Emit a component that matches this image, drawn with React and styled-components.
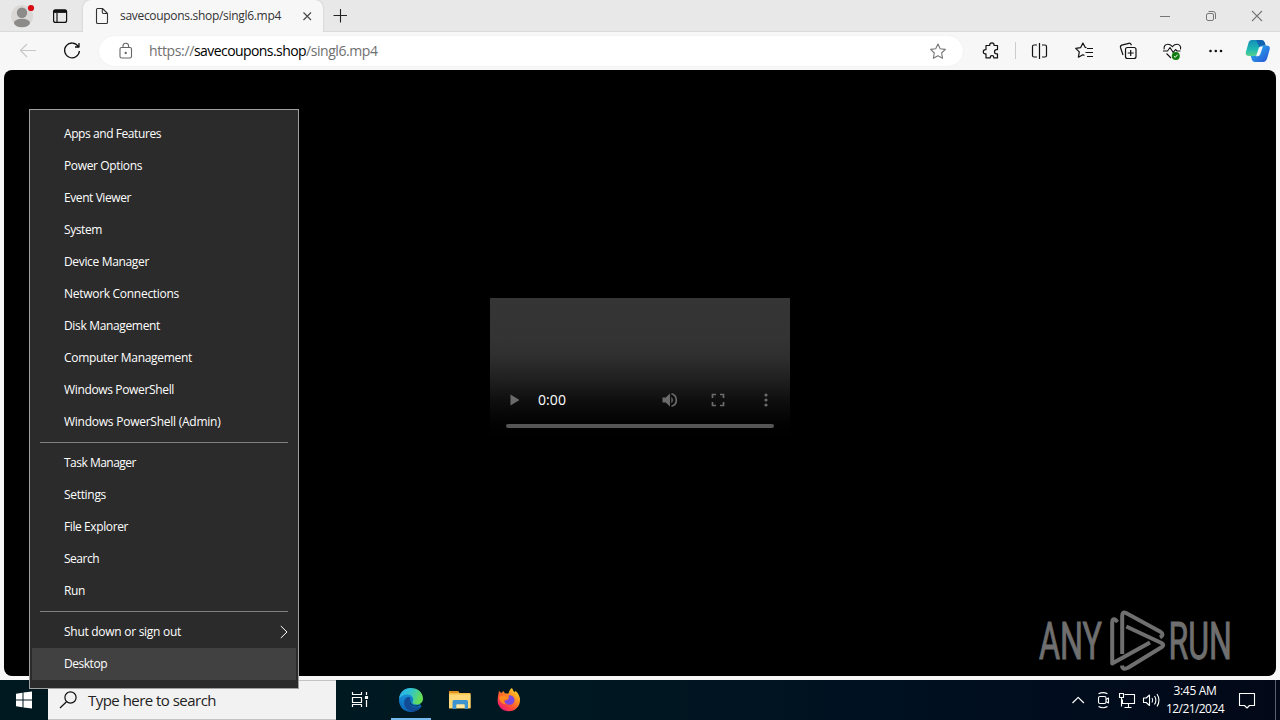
import React from 'react'
import styled, { createGlobalStyle } from 'styled-components'

const menuGroups = [
  [
    { label: 'Apps and Features', width: 97 },
    { label: 'Power Options', width: 78 },
    { label: 'Event Viewer', width: 67 },
    { label: 'System', width: 38 },
    { label: 'Device Manager', width: 85 },
    { label: 'Network Connections', width: 115 },
    { label: 'Disk Management', width: 96 },
    { label: 'Computer Management', width: 128 },
    { label: 'Windows PowerShell', width: 110 },
    { label: 'Windows PowerShell (Admin)', width: 156.5 },
  ],
  [
    { label: 'Task Manager', width: 72 },
    { label: 'Settings', width: 42 },
    { label: 'File Explorer', width: 64 },
    { label: 'Search', width: 35 },
    { label: 'Run', width: 21 },
  ],
  [
    { label: 'Shut down or sign out', width: 117, more: true },
    { label: 'Desktop', width: 43, active: true },
  ],
]

// keeps a label at a fixed width by adjusting the space between its letters
function Label({ width, children }) {
  const ref = React.useRef(null)
  const [spacing, setSpacing] = React.useState(0)
  React.useLayoutEffect(() => {
    const natural = ref.current.getBoundingClientRect().width
    setSpacing((width - natural) / ref.current.textContent.length)
  }, [width])
  return <LabelText ref={ref} style={{ letterSpacing: spacing + 'px' }}>{children}</LabelText>
}

function TitleBar() {
  return (
    <TitleRow>
      <Picture width="44" height="32">
        <circle cx="22" cy="16" r="11" fill="#dad8d7" />
        <circle cx="22" cy="12.7" r="5.2" fill="#8d8b89" />
        <ellipse cx="22" cy="23" rx="8" ry="4.2" fill="#8d8b89" />
        <circle cx="31" cy="8" r="3.1" fill="#d90b16" />
      </Picture>
      <LineIcon width="39" height="32" $color="#111" $weight={1.2}>
        <rect x="9.6" y="9.8" width="13" height="12.6" rx="2" />
        <path d="M9.6 11.4h13" strokeWidth="3" />
        <path d="M13 13v9" />
      </LineIcon>
      <Tab>
        <LineIcon width="37" height="32" $color="#333" $weight={1.1}>
          <path d="M14.5 8.5h5l5 5v8.7q0 1.3-1.3 1.3h-8.4q-1.3 0-1.3-1.3V9.8q0-1.3 1-1.3zM19.3 8.7v3.6q0 1.2 1.2 1.2h4" />
        </LineIcon>
        <TabTitle><Label width={161}>savecoupons.shop/singl6.mp4</Label></TabTitle>
        <LineIcon width="32" height="32" $color="#444" $weight={1.1}>
          <path d="M12.5 12.5l7.5 7.5M20 12.5l-7.5 7.5" />
        </LineIcon>
      </Tab>
      <LineIcon width="34" height="32" $color="#222" $weight={1.1}>
        <path d="M10.5 15.5H24M17.5 9v13.5" />
      </LineIcon>
      <Spacer />
      <LineIcon width="46" height="32" $color="#777" $weight={1}><path d="M18 16.5h10" /></LineIcon>
      <LineIcon width="46" height="32" $color="#777" $weight={1}>
        <rect x="18.5" y="13.5" width="7" height="7" rx="1.5" />
        <path d="M20.5 11.5H25q2.5 0 2.5 2.5v5" />
      </LineIcon>
      <LineIcon width="46" height="32" $color="#777" $weight={1.1}><path d="M18 11l10 10M28 11L18 21" /></LineIcon>
    </TitleRow>
  )
}

function Toolbar() {
  return (
    <ToolRow>
      <LineIcon width="50" height="38" $color="#c7c7c7" $weight={1.1}>
        <path d="M36 18.5H20.5M27 12l-6.5 6.5L27 25" />
      </LineIcon>
      <LineIcon width="49" height="38" $color="#111" $weight={1.3}>
        <path d="M28.3 14.5A7.4 7.4 0 1 0 29.4 19M29 11v4h-4" />
      </LineIcon>
      <AddressBar>
        <LineIcon width="50" height="30" $color="#666" $weight={1.1}>
          <rect x="21" y="11.5" width="11.5" height="10.5" rx="1.6" />
          <path d="M24 11.5V10a2.8 2.8 0 0 1 5.6 0v1.5" />
          <circle cx="26.7" cy="17" r=".6" fill="#666" />
        </LineIcon>
        <Url>
          <Label width={45}>https://</Label>
          <Host><Label width={112}>savecoupons.shop</Label></Host>
          <Label width={71.5}>/singl6.mp4</Label>
        </Url>
        <Spacer />
        <LineIcon width="51" height="30" $color="#777" $weight={1.1}>
          <path d="M26 8l2.2 4.7 5.2.7-3.8 3.6.9 5.2-4.5-2.5-4.6 2.5.9-5.2-3.7-3.6 5.1-.7z" />
        </LineIcon>
      </AddressBar>
      <LineIcon width="52" height="38" $color="#111" $weight={1.2}>
        <path d="M23 13.500h3.700v-.4a2.200 2.200 0 0 1 4.400 0v.4h3.400v4.100h-.9a2.100 2.100 0 0 0 0 4.200h.9v4.100h-3.700v-.4a1.800 1.800 0 0 0-3.600 0v.4H23v-4.100h-.6a2.100 2.100 0 0 1 0-4.200h.6z" />
      </LineIcon>
      <Divider />
      <LineIcon width="46" height="38" $color="#111" $weight={1.2}>
        <path d="M21 13h-3q-1.500 0-1.500 1.500v9q0 1.500 1.500 1.500h3M26 13h3q1.500 0 1.500 1.500v9q0 1.500-1.500 1.500h-3M23.500 11v16" />
      </LineIcon>
      <LineIcon width="44" height="38" $color="#111" $weight={1.2}>
        <path d="M24.5 15.7l-1.2-.2-2.4-4.4-2.2 4.5-5 .8 3.6 3.5-.9 5.3 4.5-2.5 1.5.8M25 16.5h6M23.5 20.5H31M25 24.5h6" />
      </LineIcon>
      <LineIcon width="44" height="38" $color="#111" $weight={1.2}>
        <rect x="19.5" y="15.5" width="10.5" height="11" rx="2" />
        <path d="M24.7 18v6M21.7 21h6M17 23l-2.5-7.500q-.5-1.800 1.300-2.400l7-1.800q1.700-.4 2.300 1.200l.3.8" />
      </LineIcon>
      <LineIcon width="44" height="38" $color="#111" $weight={1.1}>
        <path d="M14.200 17.300c-.7-3 1.200-5 3.500-5 2 0 3.400.9 4.700 2.300 1.300-1.400 2.700-2.300 4.700-2.300 2.500 0 4.100 2.200 3.400 5M13 19h4.500l2.500-3.500 3.200 5 2.300-3 1.500 1.500h3.500M16.500 21.500l4.500 4.500" />
        <circle cx="25.8" cy="24" r="4" fill="#107c10" stroke="none" />
        <path d="M24 24.300l1.300 1 2.300-2.600" stroke="#fff" strokeWidth="1" />
      </LineIcon>
      <Picture width="44" height="38">
        <g fill="#111"><circle cx="16.5" cy="19" r="1.3" /><circle cx="21.8" cy="19" r="1.3" /><circle cx="27" cy="19" r="1.3" /></g>
      </Picture>
      <Picture width="42" height="38">
        <defs>
          <linearGradient id="copA" x1="0" y1="0" x2="0" y2="1"><stop offset="0" stopColor="#168cb9" /><stop offset=".6" stopColor="#20bbb2" /><stop offset="1" stopColor="#58cf8b" /></linearGradient>
          <linearGradient id="copB" x1="0" y1="0" x2="1" y2="1"><stop offset="0" stopColor="#24b9f2" /><stop offset="1" stopColor="#2c51d5" /></linearGradient>
        </defs>
        <g transform="translate(-2 0) scale(1.06 1)">
          <path d="M14 8h10q2.400 0 3.100 2.500l.8 3h-3.100q-2 0-2.700 2l-1.800 6q-.8 2.500-3.200 2.500h-4.300q-4.600 0-3.400-4.200l2.300-8.500Q12.400 8 15 8z" fill="url(#copA)" />
          <path d="M24 13.500h4.300q4.600 0 3.400 4.200l-2.300 8.600q-1 3.700-3.900 3.700H18q-2.400 0-3.100-2.500l-1-3.500h3.200q2.300 0 3-2l1.500-5.500q.8-3 2.400-3z" fill="url(#copB)" />
          <path d="M19 8h5q2.400 0 3.100 2.500l.8 3h-3.100q-2.200 0-2.600 1.800z" fill="#1264b1" />
          <path d="M21.500 16q.6-1.600 1.900-1.600h2l-2.600 8q-.6 1.800-2.400 1.800h-1.500z" fill="#f7f7f7" />
        </g>
      </Picture>
    </ToolRow>
  )
}

function Player() {
  return (
    <Video>
      <Controls>
        <Glyph width="48" height="48"><path d="M20.5 18.500v11l9-5.500z" /></Glyph>
        <Time><Label width={28}>0:00</Label></Time>
        <Spacer />
        <Glyph width="48" height="48">
          <path d="M16.500 21.500v5h3.200l4.300 4V17.500l-4.300 4z" />
          <path d="M25.300 20.700q3.400 3.300 0 6.600z" />
          <path d="M25.500 17.800a6.400 6.400 0 0 1 0 12.400" fill="none" stroke="#6b6b6b" strokeWidth="1.7" />
        </Glyph>
        <Glyph width="48" height="48">
          <path d="M18.500 22v-3.500h3.500M26 18.500h3.500v3.500M29.500 26v3.500h-3.500M22 29.500h-3.500v-3.500" fill="none" stroke="#6b6b6b" strokeWidth="1.7" />
        </Glyph>
        <Glyph width="48" height="48">
          <circle cx="24" cy="19" r="1.6" /><circle cx="24" cy="24" r="1.6" /><circle cx="24" cy="29" r="1.6" />
        </Glyph>
      </Controls>
      <Track />
    </Video>
  )
}

function Watermark() {
  return (
    <Mark width="204" height="66" viewBox="0 0 204 66">
      <g fontFamily="Roboto, sans-serif" fontSize="51" fill="#6f6f6f" stroke="#6f6f6f" strokeWidth="1">
        <text x="1" y="52" textLength="63" lengthAdjust="spacingAndGlyphs">ANY</text>
        <text x="130.5" y="52" textLength="63.5" lengthAdjust="spacingAndGlyphs">RUN</text>
      </g>
      <g fill="none" stroke="#6f6f6f" strokeWidth="4" strokeLinejoin="round">
        <path d="M79.500 15L77.500 12.800Q74.200 11 74.200 15.500V56.500L112 35.500" />
        <path d="M84.200 47V9Q84.200 4 88 6L122 24.500Q127 27.500 122 30.500" />
        <path d="M88.300 19.500L123.500 36Q127 38 123.500 40.300L90 60.800Q84.500 63.500 84 58.500" />
      </g>
    </Mark>
  )
}

function StartMenu() {
  return (
    <Menu>
      {menuGroups.map((group, i) => (
        <MenuGroup key={i}>
          {group.map((item) => (
            <MenuItem key={item.label} $active={item.active}>
              <Label width={item.width}>{item.label}</Label>
              {item.more && (
                <LineIcon width="8" height="14" $color="#fff" $weight={1}><path d="M.8 1L7 7 .8 13" /></LineIcon>
              )}
            </MenuItem>
          ))}
        </MenuGroup>
      ))}
    </Menu>
  )
}

function Taskbar() {
  return (
    <Bar>
      <Picture width="48" height="40">
        <path d="M16 13.700l6.500-1v6.800H16zM23.500 12.500l8.500-1v8h-8.500zM16 20.500h6.500v6.800l-6.500-1zM23.500 20.500H32v8l-8.500-1z" fill="#fff" />
      </Picture>
      <SearchBox>
        <LineIcon width="40" height="38" $color="#111" $weight={1.2}>
          <circle cx="22.5" cy="16.5" r="5.6" /><path d="M18.500 20.700L12 27" />
        </LineIcon>
        <Label width={128}>Type here to search</Label>
      </SearchBox>
      <TaskButton>
        <LineIcon width="48" height="40" $color="#fff" $weight={1.2}>
          <path d="M16.500 12v2.500h9V12M16.500 27v-2.500h9V27M16.500 17.500h9v5h-9zM30.500 12v3M30.500 20v7" />
          <rect x="29.5" y="16.5" width="2" height="2" fill="#fff" />
        </LineIcon>
      </TaskButton>
      <TaskButton $open>
        <Picture width="48" height="40">
          <defs>
            <linearGradient id="edgeA" x1="0" y1="0" x2="1" y2=".3"><stop offset="0" stopColor="#2aaef0" /><stop offset=".5" stopColor="#30c3cf" /><stop offset="1" stopColor="#65de55" /></linearGradient>
            <linearGradient id="edgeB" x1="0" y1="0" x2="0" y2="1"><stop offset="0" stopColor="#1b9de2" /><stop offset="1" stopColor="#0b64b5" /></linearGradient>
          </defs>
          <path d="M12 20C12 12.500 17.500 8 24 8l6 12 4.500 6.300C32 30 28.500 32 24 32c-7 0-12-5-12-12z" fill="url(#edgeB)" />
          <path d="M12.200 18.500C13 12 18 8 24 8c7 0 12 4.800 12 10.500 0 4-3 6-6.500 6-3 0-4.500-1.300-4-2.500 1.800-2.600.3-7.500-5-7.500-4 0-7 2-8.300 4z" fill="url(#edgeA)" />
          <path d="M20.500 17c-3 1.500-4 4.500-3 8 1.200 4.400 5 6.700 9.500 6.500 3.300-.8 6-2.700 7.500-5.200-5.500 2.700-11.800.7-12-4.800 0-1.700.7-2.400 1.300-3-.8-1.200-2-1.700-3.300-1.500z" fill="#124a94" />
          <path d="M24 19c-2 2-.2 6.500 4.500 6.800 2.500 0 4.500-.5 6-1.200-4.500 3.500-11.500 1.800-11.700-3 0-1.200.6-2 1.200-2.600z" fill="#001820" />
        </Picture>
      </TaskButton>
      <TaskButton>
        <Picture width="48" height="40">
          <path d="M13 11h9l1.500 2h11v15.500H13z" fill="#f5bd45" />
          <path d="M13 11h9l1 2H13z" fill="#de9220" />
          <path d="M13 14.500h21.500V28H13z" fill="#ffd978" />
          <path d="M18 20h12.500q1.500 0 1.500 1.500V29h-3.500v-4.500h-8V29h-4v-7.500Q16.500 20 18 20z" fill="#3e94d1" />
          <path d="M20.500 24.500h8V28h-8z" fill="#ffe7a0" />
        </Picture>
      </TaskButton>
      <TaskButton>
        <Picture width="48" height="40">
          <defs>
            <linearGradient id="fox" x1="1" y1="0" x2=".2" y2="1"><stop offset="0" stopColor="#fff13a" /><stop offset=".35" stopColor="#ff9b1f" /><stop offset=".7" stopColor="#ff4b37" /><stop offset="1" stopColor="#e7127d" /></linearGradient>
          </defs>
          <path d="M14 11q1.500 1 2 2.300l2.500-2.300q.5 1.800 2 2.500h3q1-4.500 3.500-5.500 1 3 3 4.300l.5-1.500q4.500 4 4.500 9.500c0 6.300-5 11-11.200 11S12.600 26.500 12.600 20.500c0-3.500 1-7 1.400-9.500z" fill="url(#fox)" />
          <path d="M24 15.200c3.800 0 5.500 2.300 5.500 5s-2.200 4.500-4.800 4.500c-3.200 0-5.500-1.500-5.700-4l4-1z" fill="#7a48df" />
          <path d="M14.500 16.500q3-1.800 6-.5l3.500 1.500q-.5 2-3.200 2.300c-2.400.4-1.600 3.800 1.200 4.200-4.500 1-8.500-3-7.500-7.500z" fill="#ff8a1e" />
        </Picture>
      </TaskButton>
      <Spacer />
      <LineIcon width="24" height="40" $color="#fff" $weight={1.2}><path d="M6.500 23l5.700-5.700 5.700 5.700" /></LineIcon>
      <LineIcon width="24" height="40" $color="#fff" $weight={1.1}>
        <rect x="8.5" y="16.5" width="7.5" height="7" rx="1.5" />
        <path d="M16 19.500l2.500-1.500v5L16 21.500M8.500 13.800q4.500-2.400 9 0M8.500 26.500q4.500 2.400 9 0" />
      </LineIcon>
      <LineIcon width="25" height="40" $color="#fff" $weight={1.1}>
        <path d="M10.500 14.500h10v9h-12v-4M14.500 23.500v3.500M10.500 27.500h7" />
        <path d="M5.500 13.500h4v4h-4zM7.500 17.500v9" />
      </LineIcon>
      <LineIcon width="24" height="40" $color="#fff" $weight={1.1}>
        <path d="M4.500 18v4.500h2.700l3.300 3V15l-3.300 3zM13 18q1.500 2.200 0 4.500M15.500 16q2.800 4.200 0 8.500M18 14q4 6.200 0 12.500" />
      </LineIcon>
      <Clock>
        <Label width={43}>3:45 AM</Label>
        <Label width={58}>12/21/2024</Label>
      </Clock>
      <LineIcon width="40" height="40" $color="#fff" $weight={1.1}>
        <path d="M12.500 13.500h15v12h-5L20 28l-2.500-2.500h-5z" />
      </LineIcon>
      <ShowDesktop />
    </Bar>
  )
}

function App() {
  return (
    <Screen>
      <GlobalStyle />
      <TitleBar />
      <Toolbar />
      <PageArea>
        <Page>
          <Player />
          <Watermark />
        </Page>
      </PageArea>
      <Taskbar />
      <StartMenu />
    </Screen>
  )
}

export default App

const GlobalStyle = createGlobalStyle`
  *{
    box-sizing:border-box;
  }
  body{
    margin:0;
    overflow:hidden;
    font-family:'Open Sans','Noto Sans',sans-serif;
  }
`
const Screen = styled.div`
  position:relative;
  display:flex;
  flex-direction:column;
  width:1280px;
  height:720px;
  background:#f7f7f7;
`
const LabelText = styled.span`
  display:inline-block;
  white-space:pre;
`
const Picture = styled.svg`
  display:block;
  flex:none;
`
const LineIcon = styled(Picture)`
  fill:none;
  stroke:${(p) => p.$color};
  stroke-width:${(p) => p.$weight};
  stroke-linejoin:round;
`
const Spacer = styled.div`
  flex:1;
`
const TitleRow = styled.div`
  display:flex;
  height:32px;
  background:#e8e8e8;
  box-shadow:inset 0 -1px #dadada;
`
const Tab = styled.div`
  display:flex;
  align-items:center;
  width:240px;
  height:32px;
  background:#f7f7f7;
  border-radius:8px 8px 0 0;
  box-shadow:0 0 2px #bbb;
  clip-path:inset(0 -3px 0 -3px);
`
const TabTitle = styled.div`
  width:171px;
  font-size:12px;
  line-height:16px;
  color:#333;
`
const ToolRow = styled.div`
  display:flex;
  height:38px;
`
const AddressBar = styled.div`
  display:flex;
  width:865px;
  height:30px;
  margin-top:4px;
  background:#fff;
  border-radius:15px;
  box-shadow:0 0 1px #ddd;
`
const Url = styled.div`
  font-size:14px;
  line-height:30px;
  color:#707070;
`
const Host = styled.span`
  color:#000;
`
const Divider = styled.div`
  width:1px;
  height:17px;
  margin-top:10px;
  background:#ccc;
`
const PageArea = styled.div`
  display:flex;
  height:610px;
  padding:0 4px 4px;
`
const Page = styled.div`
  position:relative;
  display:flex;
  flex:1;
  align-items:center;
  justify-content:center;
  background:#000;
  border-radius:8px;
`
const Video = styled.div`
  display:flex;
  flex-direction:column;
  justify-content:flex-end;
  width:300px;
  height:150px;
  padding-bottom:20px;
  background:linear-gradient(#353535 0,#333 42px,#2f2f2f 58px,#1f1f1f 82px,#0e0e0e 103px,#030303 124px,#000 140px);
`
const Controls = styled.div`
  display:flex;
  height:48px;
`
const Glyph = styled(Picture)`
  fill:#6b6b6b;
`
const Time = styled.div`
  color:#fff;
  font-size:14px;
  line-height:48px;
`
const Track = styled.div`
  height:4px;
  margin:0 16px;
  border-radius:2px;
  background:#555;
`
const Mark = styled.svg`
  position:absolute;
  right:34px;
  bottom:3px;
  overflow:visible;
`
const Menu = styled.div`
  position:absolute;
  left:29px;
  top:109px;
  width:270px;
  height:580px;
  padding:8px 2px;
  background:#2b2b2b;
  border:1px solid #a0a0a0;
`
const MenuGroup = styled.div`
  & + &::before{
    content:'';
    display:block;
    height:1px;
    margin:4px 8px;
    background:#808080;
  }
`
const MenuItem = styled.div`
  display:flex;
  align-items:center;
  justify-content:space-between;
  height:32px;
  padding:0 8px 0 32px;
  font-size:12px;
  font-weight:500;
  line-height:16px;
  color:#fff;
  background:${(p) => (p.$active ? '#414141' : 'transparent')};
`
const Bar = styled.div`
  display:flex;
  height:40px;
  background:linear-gradient(90deg,#001820 0,#001821 45%,#000f20 75%,#020817 100%);
`
const SearchBox = styled.div`
  display:flex;
  align-items:center;
  width:288px;
  background:#f2f2f2;
  border:1px solid #c4c4c4;
  border-width:1px 0;
  font-size:15px;
  color:#222;
`
const TaskButton = styled.div`
  width:48px;
  margin-right:1px;
  box-shadow:${(p) => (p.$open ? 'inset 4px 0 #001820, inset -4px 0 #001820, inset 0 -2px #76b9ed' : 'none')};
  &:nth-child(3){
    margin-right:3px;
  }
`
const Clock = styled.div`
  display:flex;
  flex-direction:column;
  align-items:center;
  width:64px;
  padding-top:2px;
  font-size:12px;
  line-height:18px;
  color:#fff;
`
const ShowDesktop = styled.div`
  width:5px;
  margin-left:8px;
  border-left:1px solid #5a606c;
`
